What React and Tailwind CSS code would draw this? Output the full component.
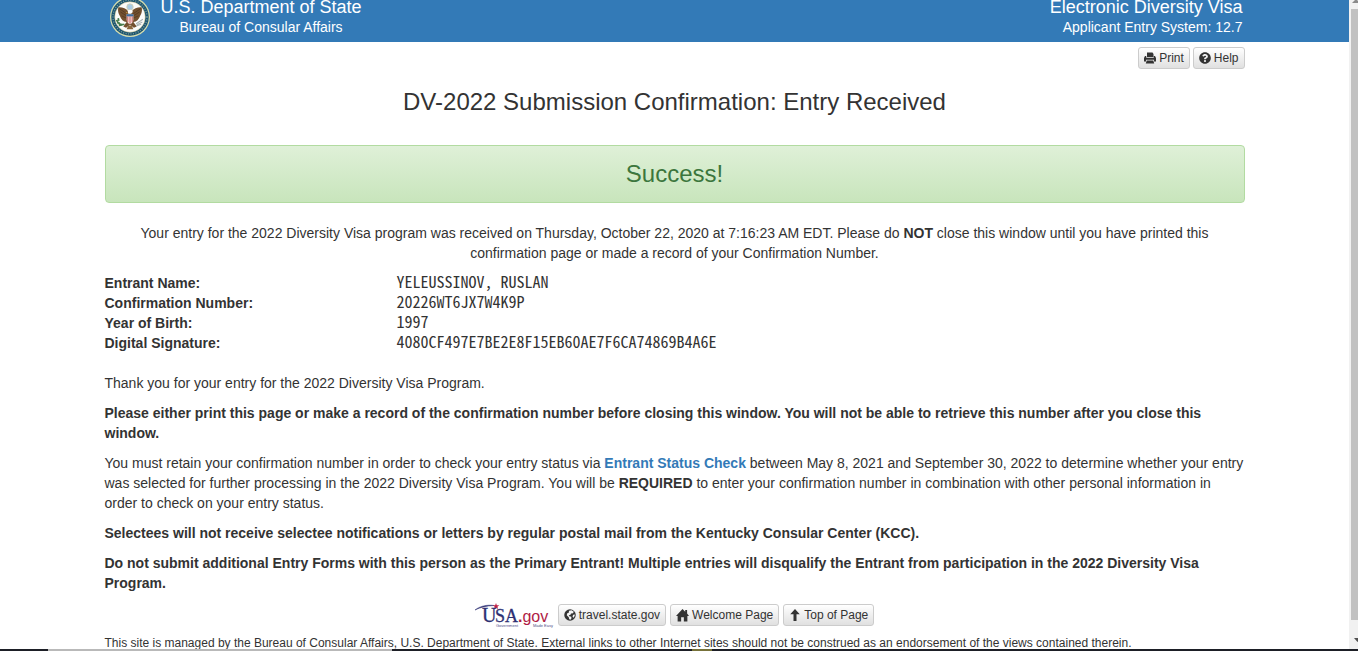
import React from "react";
import { FaQuestionCircle } from "react-icons/fa";

const ICON = "h-3 w-3 shrink-0";

function PrintIcon() {
  return (
    <svg viewBox="0 0 24 24" className={ICON} fill="currentColor" aria-hidden="true">
      <path d="M6 1h11l2 3v6H6z" />
      <path d="M2 8h2.500v3.500h15V8H22l2 4v7h-4v-3.500H4V19H0v-7z" />
      <path d="M5.500 17h13l2 6h-17z" />
    </svg>
  );
}

function GlobeIcon() {
  return (
    <svg viewBox="0 0 24 24" className={ICON} aria-hidden="true">
      <circle cx="12" cy="12" r="11.500" fill="currentColor" />
      <path
        d="M10 3.500l5-1 4.500 3-1.500 3-4 .5-1.500 3-3 .5 1 2 4 1 .5 3-2 3-2.500-1-1-4-4-4 1-4 3-1z M18 12l3-1.500.5 3-2.500 4-2-2z"
        fill="#f5f5f5"
      />
    </svg>
  );
}

function HomeIcon() {
  return (
    <svg viewBox="0 0 24 24" className="h-[13px] w-[13px] shrink-0" fill="currentColor" aria-hidden="true">
      <path d="M12 0l5 5V2h3.500v6.500L24 13h-3v10h-6.500v-8h-5v8H3V13H0z" />
    </svg>
  );
}

function ArrowUpIcon() {
  return (
    <svg viewBox="0 0 24 24" className={ICON} fill="currentColor" aria-hidden="true">
      <path d="M12 0l9.500 10.500H15V24H9V10.500H2.500z" />
    </svg>
  );
}

function Seal() {
  return (
    <svg viewBox="0 0 80 80" className="h-10 w-10 shrink-0" role="img" aria-label="Department of State seal">
      <circle cx="40" cy="40" r="40" fill="#d5dcae" />
      <circle cx="40" cy="40" r="37.500" fill="#1d5571" />
      <circle cx="40" cy="40" r="34" fill="none" stroke="#7fa09d" strokeWidth="2.500" strokeDasharray="2 3" />
      <circle cx="40" cy="40" r="30.500" fill="#fcfcfa" stroke="#cdbf83" strokeWidth="1" />
      <circle cx="40" cy="20" r="6.500" fill="#a9cbe3" stroke="#d9d2a8" strokeWidth="1.500" />
      <g transform="translate(40 40) scale(1.120) translate(-40 -40)">
        <path d="M37 30c-4-5-12-8-18-7-1 6 0 11 3 15 2 6 6 10 12 11l-6 8 5 2 7-5 7 5 5-2-6-8c6-1 10-5 12-11 3-4 4-9 3-15-6-1-14 2-18 7z" fill="#73502f" />
        <path d="M21 25l13 9M23 31l11 7M25 38l9 4M59 25l-13 9M57 31l-11 7M55 38l-9 4" stroke="#503721" strokeWidth="1.300" />
        <path d="M36 31c0-5 8-5 9 0l-3 3h-5z" fill="#fff" />
        <path d="M35 31l-3 1 3 2z" fill="#d6a13b" />
        <path d="M34 35h12v9c0 5-3 8-6 9-3-1-6-4-6-9z" fill="#f4dcda" />
        <path d="M34 35h12v4H34z" fill="#3e6d9f" />
        <path d="M36 39v10M40 39v13M44 39v10" stroke="#c55c5a" strokeWidth="1.700" />
        <path d="M30 53c-6 2-11-1-14-8M26 54l-6 1M22 51l-5-1M20 47l-1-5" stroke="#477c4c" strokeWidth="3" fill="none" />
        <path d="M51 52l12-8M52 54l10-5M51 56l9-3" stroke="#a9b2b1" strokeWidth="1.800" />
        <path d="M37 55l-3 7h12l-3-7z" fill="#8b673e" />
      </g>
    </svg>
  );
}

function UsaGovLogo() {
  return (
    <svg viewBox="0 0 79 26" className="h-[26px] w-[79px] shrink-0" role="img" aria-label="USA.gov, Government Made Easy">
      <path d="M0 8C5 4 12 2.500 19 3.500 11 3.800 5 5.500 0 8z" fill="#2d2f73" stroke="#2d2f73" strokeWidth=".5" />
      <path d="M21 1l.8 2.300 2.500-.1-1.900 1.600.8 2.300-2.200-1.400-2 1.400.7-2.300-1.900-1.600 2.400.1z" fill="#bf2145" />
      <text x="7" y="20" fontFamily="Liberation Serif, serif" fontSize="20" fill="#2d2f73" stroke="#2d2f73" strokeWidth=".3">U</text>
      <text x="20" y="20" fontFamily="Liberation Serif, serif" fontSize="18" fill="#2d2f73" stroke="#2d2f73" strokeWidth=".3">SA</text>
      <text x="43" y="20" fontFamily="Liberation Sans, sans-serif" fontSize="16" fill="#b01c45">
        <tspan fontWeight="bold">.</tspan>gov
      </text>
      <text x="21" y="25" fontFamily="Liberation Sans, sans-serif" fontSize="4" fill="#4c4e88">Government</text>
      <text x="58" y="25" fontFamily="Liberation Sans, sans-serif" fontSize="4" fill="#4c4e88">Made Easy</text>
    </svg>
  );
}

const BUTTON =
  "inline-flex h-[22px] items-center gap-[3px] rounded-[3px] border border-[#ccc] bg-linear-to-b from-white to-[#e0e0e0] px-[5px] text-[12px] leading-[18px] text-[#333] whitespace-nowrap";

const details = [
  ["Entrant Name:", "YELEUSSINOV, RUSLAN"],
  ["Confirmation Number:", "20226WT6JX7W4K9P"],
  ["Year of Birth:", "1997"],
  ["Digital Signature:", "4080CF497E7BE2E8F15EB60AE7F6CA74869B4A6E"],
];

function Header() {
  return (
    <header className="bg-[#337ab7] text-white">
      <div className="mx-auto flex h-[42px] max-w-[1140px] items-end justify-between overflow-hidden pr-[2px] pl-[5px]">
        <div className="flex items-end gap-[11px] pb-[5px]">
          <Seal />
          <div className="text-center">
            <div className="text-[18px] leading-5">U.S. Department of State</div>
            <div className="text-[14px] leading-5">Bureau of Consular Affairs</div>
          </div>
        </div>
        <div className="pb-[5px] text-right">
          <div className="text-[18px] leading-5">Electronic Diversity Visa</div>
          <div className="text-[14px] leading-5">Applicant Entry System: 12.7</div>
        </div>
      </div>
    </header>
  );
}

function Scrollbar() {
  return (
    <div className="flex w-[9px] shrink-0 flex-col items-end overflow-hidden bg-[#f1f1f1]" aria-hidden="true">
      <svg viewBox="0 0 7 9" className="h-[9px] w-[7px] shrink-0">
        <path d="M1 3l4-4 4 4z" fill="#8a8a8a" />
      </svg>
      <div className="w-[7px] flex-1 bg-[#c1c1c1]" />
      <svg viewBox="0 0 7 29" className="h-[29px] w-[7px] shrink-0">
        <path d="M3 18h7l-3.500 4z" fill="#505050" />
      </svg>
    </div>
  );
}

export default function App() {
  return (
    <div className="flex h-screen flex-col overflow-hidden bg-white font-['Liberation_Sans',Arial,sans-serif] text-[14px] leading-5 text-[#333]">
      <div className="flex min-h-0 flex-1">
        <div className="min-w-0 flex-1 overflow-hidden">
          <Header />
          <main className="mx-auto max-w-[1140px]">
            <div className="flex justify-end gap-[3px] pt-[5px]">
              <button type="button" className={BUTTON}>
                <PrintIcon />
                Print
              </button>
              <button type="button" className={BUTTON}>
                <FaQuestionCircle className={ICON} />
                Help
              </button>
            </div>
            <h1 className="mt-5 text-center text-[24px] leading-[26px]">
              DV-2022 Submission Confirmation: Entry Received
            </h1>
            <div
              role="status"
              className="mt-[30px] rounded-[4px] border border-[#b2dba1] bg-linear-to-b from-[#dff0d8] to-[#c8e5bc] py-[15px] text-center text-[24px] leading-[26px] text-[#3c763d]"
            >
              Success!
            </div>
            <p className="mt-5 px-[15px] text-center">
              Your entry for the 2022 Diversity Visa program was received on Thursday, October 22, 2020 at 7:16:23 AM
              EDT. Please do <b>NOT</b> close this window until you have printed this confirmation page or made a record
              of your Confirmation Number.
            </p>
            <dl className="mt-[10px] mb-5">
              {details.map(([label, value]) => (
                <div key={label} className="grid grid-cols-[292px_1fr]">
                  <dt className="font-bold">{label}</dt>
                  <dd className="font-['Noto_Sans_Mono_CJK_SC','Liberation_Mono',monospace] text-[16px] leading-4">{value}</dd>
                </div>
              ))}
            </dl>
            <div className="flex flex-col gap-[10px]">
              <p>Thank you for your entry for the 2022 Diversity Visa Program.</p>
              <p className="font-bold">
                Please either print this page or make a record of the confirmation number before closing this window.
                You will not be able to retrieve this number after you close this window.
              </p>
              <p>
                You must retain your confirmation number in order to check your entry status via{" "}
                <a href="#status" className="font-bold text-[#337ab7]">
                  Entrant Status Check
                </a>{" "}
                between May 8, 2021 and September 30, 2022 to determine whether your entry was selected for further
                processing in the 2022 Diversity Visa Program. You will be <b>REQUIRED</b> to enter your confirmation
                number in combination with other personal information in order to check on your entry status.
              </p>
              <p className="font-bold">
                Selectees will not receive selectee notifications or letters by regular postal mail from the Kentucky
                Consular Center (KCC).
              </p>
              <p className="font-bold">
                Do not submit additional Entry Forms with this person as the Primary Entrant! Multiple entries will
                disqualify the Entrant from participation in the 2022 Diversity Visa Program.
              </p>
            </div>
          </main>
          <footer className="mx-auto max-w-[1140px] pt-[9px]">
            <div className="flex items-center justify-center gap-1">
              <a href="#usa">
                <UsaGovLogo />
              </a>
              <a href="#travel" className={BUTTON}>
                <GlobeIcon />
                travel.state.gov
              </a>
              <a href="#welcome" className={BUTTON}>
                <HomeIcon />
                Welcome Page
              </a>
              <a href="#top" className={BUTTON}>
                <ArrowUpIcon />
                Top of Page
              </a>
            </div>
            <p className="mt-[6px] text-[12px] leading-[18px]">
              This site is managed by the Bureau of Consular Affairs, U.S. Department of State. External links to other
              Internet sites should not be construed as an endorsement of the views contained therein.
            </p>
          </footer>
        </div>
        <Scrollbar />
      </div>
      <div className="flex h-[2px] shrink-0 bg-[#1d1f26]" aria-hidden="true">
        <div className="w-12" />
        <div className="w-[344px] bg-[#b9b9b9]" />
        <div className="w-[98px]" />
        <div className="w-[50px] bg-[#50545a]" />
        <div className="w-[152px]" />
        <div className="w-5 bg-[#77723a]" />
      </div>
    </div>
  );
}
